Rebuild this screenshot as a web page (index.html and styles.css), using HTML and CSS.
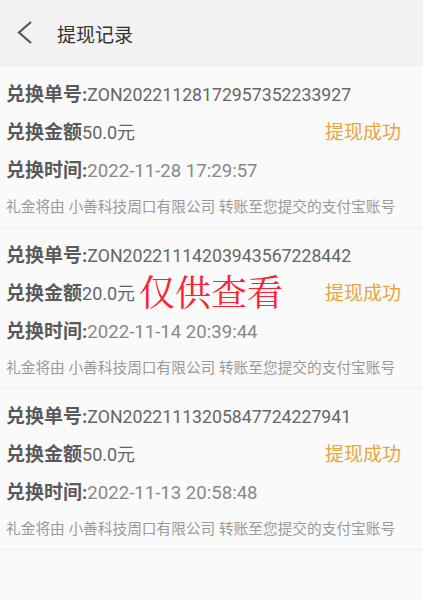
FILE: index.html
```html
<!DOCTYPE html>
<html lang="zh">
<head>
<meta charset="utf-8">
<link rel="stylesheet" href="styles.css">
</head>
<body>
<div class="page">
  <header class="bar">
    <svg class="back" width="20" height="26" viewBox="0 0 20 26"><path d="M15 2 L3 12.5 L15 23" fill="none" stroke="#555" stroke-width="2.2"/></svg>
    <h1 class="title">提现记录</h1>
  </header>
  <main class="list">
    <section class="card">
      <div class="row"><b class="lbl">兑换单号:</b><span class="val no">ZON20221128172957352233927</span></div>
      <div class="row between"><span><b class="lbl">兑换金额</b><span class="val">50.0元</span></span><span class="status">提现成功</span></div>
      <div class="row"><b class="lbl">兑换时间:</b><span class="val time">2022-11-28 17:29:57</span></div>
      <div class="note">礼金将由 小善科技周口有限公司 转账至您提交的支付宝账号</div>
    </section>
    <section class="card">
      <div class="row"><b class="lbl">兑换单号:</b><span class="val no">ZON20221114203943567228442</span></div>
      <div class="row between"><span><b class="lbl">兑换金额</b><span class="val">20.0元</span></span><span class="status">提现成功</span></div>
      <div class="row"><b class="lbl">兑换时间:</b><span class="val time">2022-11-14 20:39:44</span></div>
      <div class="note">礼金将由 小善科技周口有限公司 转账至您提交的支付宝账号</div>
      <div class="stamp">仅供查看</div>
    </section>
    <section class="card">
      <div class="row"><b class="lbl">兑换单号:</b><span class="val no">ZON20221113205847724227941</span></div>
      <div class="row between"><span><b class="lbl">兑换金额</b><span class="val">50.0元</span></span><span class="status">提现成功</span></div>
      <div class="row"><b class="lbl">兑换时间:</b><span class="val time">2022-11-13 20:58:48</span></div>
      <div class="note">礼金将由 小善科技周口有限公司 转账至您提交的支付宝账号</div>
    </section>
  </main>
</div>
</body>
</html>
```
FILE: styles.css
```css
* { box-sizing: border-box; margin: 0; padding: 0; }
html, body { background: #fafafa; }
body { font-family: Roboto, "Noto Sans CJK SC", sans-serif; color: #555; width: 423px; height: 600px; overflow: hidden; }
.bar { height: 67px; background: #f2f2f2; display: flex; align-items: center; padding-left: 16px; }
.back { display: block; margin-top: -2px; }
.title { font-size: 19px; font-weight: 400; color: #333; margin-left: 21px; margin-top: -1px; }
.card { position: relative; height: 161px; border-bottom: 1.5px solid #eeeeee; padding: 9px 22px 0 6px; }
.row { height: 38px; display: flex; align-items: center; font-size: 18px; line-height: 26px; }
.between { justify-content: space-between; }
.lbl { font-weight: 700; color: #5a5a5a; font-size: 19px; }
.val { color: #666; }
.no { font-size: 17.7px; }
.time { color: #888; font-size: 18.6px; }
.status { color: #e8a53e; font-size: 19px; }
.note { font-size: 14.7px; color: #999; margin-top: 6px; line-height: 22px; }
.stamp { position: absolute; left: 139px; top: 37px; font-family: "Noto Serif CJK SC", serif; font-size: 36px; color: #ff2030; }
```
